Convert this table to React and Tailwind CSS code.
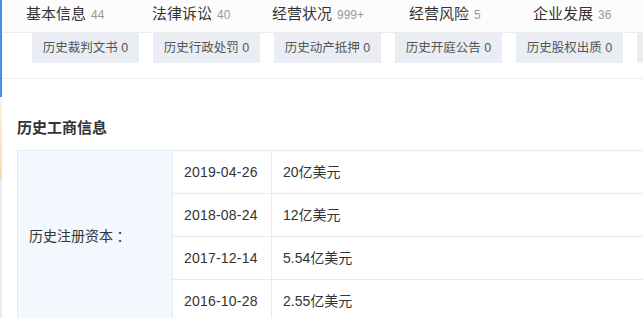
import React from 'react'

const tabs = [
  { name: '基本信息', count: '44', w: 'w-[126px]' },
  { name: '法律诉讼', count: '40', w: 'w-[120px]' },
  { name: '经营状况', count: '999+', w: 'w-[137px]' },
  { name: '经营风险', count: '5', w: 'w-[124px]' },
  { name: '企业发展', count: '36', w: 'w-[110px]' },
]

const pills = ['历史裁判文书 0', '历史行政处罚 0', '历史动产抵押 0', '历史开庭公告 0', '历史股权出质 0']

const rows = [
  { date: '2019-04-26', value: '20亿美元' },
  { date: '2018-08-24', value: '12亿美元' },
  { date: '2017-12-14', value: '5.54亿美元' },
  { date: '2016-10-28', value: '2.55亿美元' },
]

export default function App() {
  return (
    <div
      className="flex w-[643px] h-[318px] overflow-hidden bg-white text-[#333]"
      style={{ fontFamily: '"Liberation Sans", "Noto Sans CJK SC", sans-serif' }}
    >
      <div className="flex flex-col w-[2px] shrink-0">
        <div className="h-[97px] bg-[#3d93e8]" />
        <div className="h-[83px] bg-gradient-to-b from-[#fdf3e6] to-[#fbd9a8]" />
        <div className="flex-1 bg-[#ececec]" />
      </div>

      <div className="flex-1 min-w-0">
        {/* top tabs */}
        <div className="flex items-center h-[33px] pl-[24px] border-b border-[#ececec] bg-[#fcfcfc] whitespace-nowrap">
          {tabs.map((t) => (
            <div key={t.name} className={`${t.w} shrink-0 flex items-baseline gap-[5px] -mt-[3px]`}>
              <span className="text-[15px] text-[#333]">{t.name}</span>
              <span className="text-[12px] text-[#999]">{t.count}</span>
            </div>
          ))}
        </div>

        {/* sub tabs */}
        <div className="h-[46px] border-b border-[#ececec] pl-[30px] flex gap-[14px] whitespace-nowrap">
          {pills.map((p) => (
            <div
              key={p}
              className="shrink-0 h-[30px] w-[107px] flex items-center justify-center bg-[#eaeef4] text-[12.5px] text-[#555]"
            >
              {p}
            </div>
          ))}
          <div className="shrink-0 h-[30px] w-[107px] bg-[#eaeef4]" />
        </div>

        {/* section title */}
        <div className="pl-[15px] pt-[39px] text-[15px] font-bold leading-[20px] text-[#333]">
          历史工商信息
        </div>

        {/* table */}
        <div className="ml-[15px] mt-[12px] grid grid-cols-[155px_99px_1fr] border-l border-t border-[#e4ebf1] text-[14px] text-[#333]">
          <div className="row-span-4 flex items-center pl-[11px] bg-[#f2f8fd] border-r border-b border-[#e4ebf1]">
            <span>历史注册资本</span>
            <span className="font-['Noto_Sans_CJK_TC']">：</span>
          </div>
          {rows.map((r) => (
            <React.Fragment key={r.date}>
              <div className="h-[43px] flex items-center pl-[11px] border-r border-b border-[#e4ebf1] tracking-[0.2px]">
                {r.date}
              </div>
              <div className="h-[43px] flex items-center pl-[11px] border-b border-[#e4ebf1]">
                {r.value}
              </div>
            </React.Fragment>
          ))}
        </div>
      </div>
    </div>
  )
}
